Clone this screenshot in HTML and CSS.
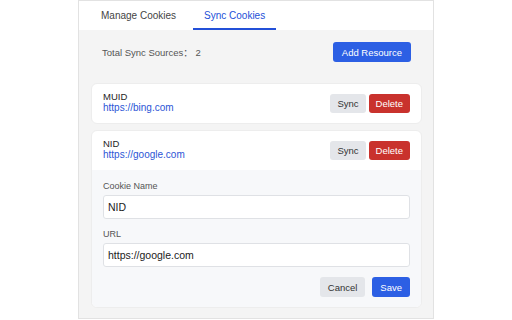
FILE: index.html
```html
<!DOCTYPE html>
<html lang="en">
<head>
  <meta charset="UTF-8" />
  <title>Sync Cookies</title>
  <link rel="stylesheet" href="styles.css">
</head>
<body>
  <div class="panel">
    <div class="tabs">
      <div class="tab">Manage Cookies</div>
      <div class="tab active">Sync Cookies</div>
    </div>

    <div class="content">
      <div class="toolbar">
        <span class="total">Total Sync Sources：&nbsp;2</span>
        <button class="btn btn-primary add">Add Resource</button>
      </div>

      <div class="card">
        <div class="card-head">
          <div class="info">
            <div class="name">MUID</div>
            <a class="url">https://bing.com</a>
          </div>
          <div class="actions">
            <button class="btn btn-gray">Sync</button>
            <button class="btn btn-red">Delete</button>
          </div>
        </div>
      </div>

      <div class="card">
        <div class="card-head">
          <div class="info">
            <div class="name">NID</div>
            <a class="url">https://google.com</a>
          </div>
          <div class="actions">
            <button class="btn btn-gray">Sync</button>
            <button class="btn btn-red">Delete</button>
          </div>
        </div>
        <div class="edit-form">
          <label>Cookie Name</label>
          <input type="text" value="NID" />
          <label>URL</label>
          <input type="text" value="https://google.com" />
          <div class="form-actions">
            <button class="btn btn-gray cancel">Cancel</button>
            <button class="btn btn-primary">Save</button>
          </div>
        </div>
      </div>
    </div>
  </div>
</body>
</html>
```

FILE: styles.css
```css
body {
  margin: 0;
  background: #fff;
  font-family: 'Liberation Sans', Arial, 'Noto Sans CJK SC', sans-serif;
  color: #333;
}

.panel {
  margin-left: 78px;
  width: 354px;
  height: 317px;
  border: 1px solid #e2e2e2;
  background: #f4f4f4;
}

.tabs {
  display: flex;
  gap: 6px;
  height: 29px;
  padding-left: 11px;
  background: #fff;
}

.tab {
  padding: 0 11px;
  font-size: 10px;
  line-height: 30px;
  color: #444;
  box-sizing: border-box;
}

.tab.active {
  color: #2350d8;
  border-bottom: 2px solid #2350d8;
  line-height: 29px;
}

.content {
  padding: 12px 11px 0 12px;
}

.toolbar {
  display: flex;
  justify-content: space-between;
  align-items: center;
  padding: 0 11px 0 11px;
  margin-bottom: 21px;
}

.total {
  font-size: 9.5px;
  color: #555;
}

.btn {
  font-family: inherit;
  font-size: 9.5px;
  border: none;
  border-radius: 3px;
  height: 19px;
  padding: 0 7px;
  cursor: pointer;
}

.btn-primary {
  background: #2c5fe4;
  color: #fff;
  height: 20px;
}

.add {
  padding: 0 9px;
}

.btn-gray {
  background: #e4e6ea;
  color: #333;
}

.btn-red {
  background: #c9322d;
  color: #fff;
}

.card {
  background: #fff;
  border-radius: 6px;
  border: 1px solid #ededed;
  margin-bottom: 6px;
  overflow: hidden;
}

.card-head {
  display: flex;
  justify-content: space-between;
  align-items: center;
  height: 39px;
  padding: 0 11px;
}

.info {
  margin-top: -3px;
}

.name {
  font-size: 9.5px;
  color: #1e1e1e;
}

.url {
  display: block;
  font-size: 10px;
  color: #2c55d6;
}

.actions {
  display: flex;
  gap: 3px;
}

.edit-form {
  background: #f7f8fa;
  padding: 11px 11px 10px;
}

label {
  display: block;
  font-size: 9px;
  color: #555;
  margin-bottom: 4px;
}

input {
  display: block;
  box-sizing: border-box;
  width: 100%;
  height: 24px;
  margin-bottom: 10px;
  padding: 0 4px;
  border: 1px solid #dfe1e5;
  border-radius: 3px;
  background: #fff;
  font-family: inherit;
  font-size: 10.5px;
  color: #222;
}

.form-actions {
  display: flex;
  justify-content: flex-end;
  gap: 7px;
}

.form-actions .btn {
  height: 20px;
  padding: 0 8px;
}
```
